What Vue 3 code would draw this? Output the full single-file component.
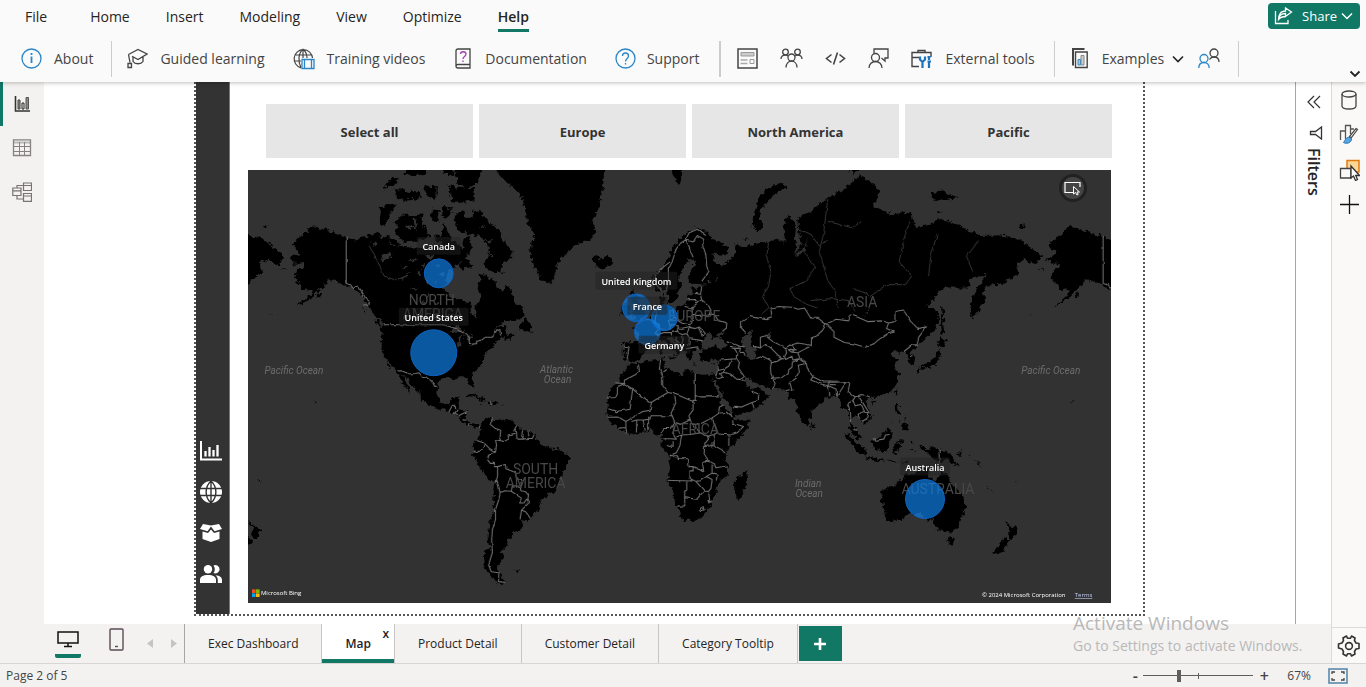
<script setup>
import { ref } from 'vue'

const menus = ['File', 'Home', 'Insert', 'Modeling', 'View', 'Optimize', 'Help']
const activeMenu = ref('Help')
const regions = ['Select all', 'Europe', 'North America', 'Pacific']
const sheets = ['Exec Dashboard', 'Map', 'Product Detail', 'Customer Detail', 'Category Tooltip']
const activeSheet = ref('Map')
const zoom = ref(32)

/* Mercator projection of "lon,lat lon,lat ..." lists */
const PX_PER_DEG = 2.1055
const RADIUS = PX_PER_DEG * 180 / Math.PI
const WORLD = PX_PER_DEG * 360
const project = (pair) => {
  const [lon, lat] = pair.split(',').map(Number)
  const x = 642.2 + lon * PX_PER_DEG
  const y = 443.7 - RADIUS * Math.log(Math.tan(Math.PI / 4 + lat * Math.PI / 360))
  return x.toFixed(1) + ' ' + y.toFixed(1)
}
const line = (s) => 'M' + s.trim().split(/\s+/).map(project).join('L')
const area = (s) => line(s) + 'Z'

const landShapes = [
  // North America
  '-168,65.6 -163,66.6 -162,66.2 -166.8,68.3 -163,69.5 -156.6,71.3 -152,70.8 -145,70 -141,69.6 -137,69 -134,69.5 -129,70 -127,70.4 -124,69.4 -122,69.8 -117,69 -115,68 -110,67.9 -108,67.5 -102,67.8 -98,67.9 -95,68 -96,69.5 -94.5,71.9 -92,70 -91,69 -88,68.5 -86,67.5 -85,69.5 -82,69.5 -81.5,68 -83,66.3 -87,65 -87.5,64.3 -91,63.5 -93.5,61.5 -94.6,59 -92.5,57 -88,56.5 -82.3,55.2 -82.2,53 -79.5,51.3 -79,52.5 -79.5,54.6 -76.6,57 -78.5,59 -77.5,61 -78,62.4 -74,62.3 -70,61 -69.5,59 -66.5,58.8 -64.5,60.3 -62,57.5 -60,55 -57,53.5 -56,52 -60,50.2 -66,50.2 -69,48.7 -71,46.8 -68,48.8 -64.5,49 -65,47.5 -64,46 -61,45.8 -60,46.5 -61.5,45.2 -65.5,43.5 -66,45 -67,44.8 -70,43.6 -70.7,42 -70,41.6 -74,40.6 -74.3,39.4 -75.5,38 -76,37 -76,35.2 -78,33.8 -81,31.8 -81.3,30 -80,27 -80.4,25.2 -81.8,26 -82.8,28 -84,30 -85.5,29.8 -88,30.4 -89.5,29.2 -91,29.3 -94,29.6 -97,28 -97.3,26 -97.8,22.5 -96,19.2 -94.5,18.2 -92,18.6 -90.5,20.8 -87,21.5 -87.5,19 -88.5,16 -86,15.9 -83.2,15 -83.7,11.5 -82,9 -79.5,9.5 -77.3,8.6 -77.5,7.5 -79.8,7.3 -80.5,8.2 -83,8.2 -85.7,10 -87.5,12.8 -91.5,14 -94.5,16.1 -97,15.8 -101,17.4 -105.5,20 -105.5,22.5 -109,25.6 -112.5,29.5 -114.8,31.7 -112.5,27.5 -110,23 -112.2,25.5 -114.5,27.5 -115.8,30 -117.1,32.5 -118.5,34 -120.6,34.6 -122.5,37.5 -124.3,40.4 -124,44 -124.6,48.3 -122.5,48.5 -124,50 -127.5,51.5 -130.3,54.5 -133,57 -137,58.8 -142,60 -146,61 -150,61 -151.5,59.4 -154,58.5 -158,56.5 -162,55.2 -164.5,54.6 -161,56 -157.5,57.7 -157.5,58.8 -162,58.7 -162,60 -165.5,61.2 -164.5,63 -161,64 -161,64.7 -166,64.6',
  // Canadian archipelago
  '-80,73.7 -76,72.8 -72,71.6 -68,70.5 -66,69 -62,67 -62,66 -66,65 -68,63 -65,62.8 -70,62.6 -77,64.3 -74,65.4 -73,68 -78,69.8 -84,70 -89,71 -89.5,73 -85,73.7 -84,72.5 -81,72.5',
  '-117,69.8 -113,68.6 -105,69 -101,69.8 -105,71.5 -105,73 -110,72.8 -114,73 -118,72 -116,71 -118,70.5',
  '-125.5,72 -123,71.2 -119,73.5 -117,74.2 -121,74.5 -125,73.8',
  '-86,66 -84,65.8 -80.5,64 -83,63.8 -87,63.6', '-100,73.8 -97,73.5 -97,71.8 -101,72.5',
  '-95,74 -90.5,73.8 -92,72.8 -95.5,72.2', '-92,76.6 -80,76.2 -80,74.7 -91,74.7', '-118,76.3 -110,75.8 -106,76 -105.5,75 -114,74.8 -117,75.4',
  '-104,76.6 -98,76.5 -98,75 -103,75.5', '-90,79 -76,79 -78,76.8 -84,76.3 -88,76.8', '-96,78.8 -91,79 -89,77.6 -95,77.8', '-110,78.5 -100,78.8 -104,77.8 -114,77.6',
  '-123,76.2 -119,76.5 -116,77.3 -119,77.4', '-98,70 -95.8,69.5 -96,68.7 -99,69', '-78,73.5 -76,73.3 -76,72.9 -79,72.8',
  // Greenland, Iceland, Svalbard
  '-70,79 -69,78 -65,77 -61,76.2 -57.5,75.3 -55,72 -51.5,70 -53.5,67 -51.5,64 -48,61 -43.5,59.9 -42,62 -40,65 -33,68 -25,69 -22,70.5 -24,72 -21,74 -19,76 -18,79 -18,82 -75,82',
  '-24,65.5 -22,66.4 -21,65.5 -16,66.5 -13.7,65 -18.5,63.4 -22.5,63.9 -22,64.8', '13,79 14,78 17,76.6 19,78.3 25,79',
  // Newfoundland, Vancouver, Caribbean, Aleutians
  '-59,47.8 -55.5,51.5 -53,48.5 -53,46.8 -56,47', '-128,50.6 -125,50 -123.5,48.4 -125.5,49', '-133,54 -131.7,53.5 -131.3,52.3',
  '-84.8,22 -81,23.1 -77,21.5 -74.3,20.2 -77.5,19.9 -79,21.5', '-74,19.8 -70,19.7 -68.5,18.5 -71.5,17.8 -74,18.4', '-78.2,18.4 -76.3,18 -77.8,17.8', '-67,18.4 -65.8,18.3 -66.9,18',
  '-154.5,57.8 -152.3,58 -154,56.9', '-168.5,53.2 -166,54 -167.5,53.5', '-172,63.6 -169,63.3 -171,63.3', '-156,20.2 -155,19.6 -156,19.1', '-177,52 -173,52.3 -177,51.8',
  // South America
  '-77.5,8.6 -75.5,10.6 -74.8,11.1 -71.5,12.3 -71.8,10.9 -68,11.3 -66,10.5 -62,10.7 -60,8.5 -57,6 -52,4.8 -50,1 -48,-1 -44,-2.5 -40,-2.8 -37,-4.8 -35,-6 -35,-9 -38,-13 -39,-17 -41,-22 -45,-23.5 -48.5,-26 -48.8,-28.5 -52,-32.5 -54.5,-34.8 -58,-34.2 -57,-36.5 -58,-38.3 -62,-39 -62.3,-40.8 -65,-41 -63.7,-42.5 -65.3,-44.5 -67.5,-46 -65.8,-47.5 -69,-50.5 -68.4,-52.3 -65.2,-54.7 -68,-55.5 -72,-53.5 -75,-51 -75.5,-47 -73,-44 -73.8,-41 -73.3,-37 -71.5,-32 -70.3,-24 -70.4,-18.3 -76,-14 -79,-8 -81.2,-5.5 -80,-3 -81,-1.5 -80,0.7 -78.5,2 -77.3,4 -77.7,7.2',
  '-61,-51.6 -58,-51.5 -60,-52.2',
  // Africa and Madagascar
  '-6,35.8 -2,35.1 3,36.8 10,37.3 11,35 10.2,34 15,32.3 19,30.3 20,32.8 25,31.6 29,31 32.3,31.3 32.6,29.9 34,26.5 35.8,24 37.2,21 37.3,18.8 39.5,15.5 43,12.5 43.2,11.5 46,10.7 51.2,11.9 50.8,9.5 47.8,4.3 43,-0.5 40,-3.5 39,-7 40.6,-11 40.6,-15 36,-18.8 35,-21 35.4,-24 32.8,-26 32,-29 28,-33 25.7,-34 20,-34.8 18.4,-34.2 18.2,-32 15.3,-27 14.5,-22.5 11.8,-17.5 13.7,-12 12.3,-6 9,-1 9.5,4 6,4.3 3.5,6.4 -2,4.8 -7.5,4.4 -13,8.5 -16.8,12.5 -17.4,14.7 -16.3,19 -17,21.3 -14.5,26 -11,28.6 -9.8,30.5 -8.5,33.3',
  '49.3,-12 50.5,-15.5 47.2,-25 45,-25.5 43.5,-22 44.5,-16.5 47.5,-15',
  // Eurasia
  '-9.3,43 -1.8,43.4 -1.2,46 -4.7,48.4 -1.5,48.7 -1.5,49.7 1.5,50.2 4,51.7 7,53.5 8.5,54 8.2,57 10.5,57.7 10.3,56 10,54.5 12.5,54.3 14.2,53.9 18.5,54.7 21,55.2 21.5,57.5 24,57.2 23.5,59 28,59.6 30,60 25,60.2 22.5,60.2 21.3,61.5 25.3,65 22,65.8 17.5,62 17.5,60.6 18.8,60 16.5,57 14.3,55.5 12.8,55.6 11.2,59 8,58 5.3,59 5,61.8 10,64 14,67.5 19,69.8 25.5,71.1 31,70.3 33,69.4 41,67.5 40,66.3 33,66.6 35,64.3 38,64 40.5,65 44,66.2 44,68.3 47,67.8 54,68.4 60,68.8 65,69.2 68,68.5 67,71 69,73 73,71.5 72.5,69 73.5,68 72,66.5 74,67 75,68.5 74,72.5 80,73.5 87,75 95,76.1 104,77.7 113,76 110,74 113,73.6 119,73 127,73.3 130,71 137,71.5 140,72.5 150,71.5 160,69.7 170,69.8 177,69.5 180,69 190,66 187,64.4 182,65.5 177.5,64.7 179.5,62.5 170,60 163.5,59.8 162,57.8 163,56 160,53.3 156.7,51 155.6,55 158,58 164,62.5 160,61.7 156,61.5 155,59.3 143,59.3 135.5,54.7 141,53 140.5,50 138,46.5 132,43.2 129.7,41.5 127.5,39.5 129.4,37 129,35.3 126.5,34.5 126.5,37.5 124.5,40 121.5,39 121,41 118,39 120,37.3 122.5,37 119.5,35 122,31.5 121.5,28.5 118.5,24.5 114,22.3 110,20.5 108,21.6 105.8,19 109,13 109,11.5 105,8.6 105,10.3 101,13.3 99.8,12 99.3,9.3 103.3,4 104,1.3 101,3 98.5,8 98.5,12 97.5,16.5 94.3,16 94.3,18.5 91.8,22.5 88,21.7 86.5,20 82,16.5 80.2,15 80,12 78,8.3 76.3,10 74,15 72.8,19.5 72.5,21 70,21 69,22.3 70,23 67,24.8 61.6,25.1 57,26.7 54,26.6 50.5,30 48.5,30.2 48.2,29 50.2,26.5 51.2,25.5 51.5,24.3 56.2,26 57,24 59.8,22.4 57.5,18.8 52,15.6 45,12.8 43.3,12.8 42.5,16.5 39,21 35,28 34.9,29.5 34.3,27.8 32.6,29.9 32.3,31.3 34.5,31.6 36,35 36,36.8 31,36.6 27.5,37 26.5,39.5 30,41 35,42 38,41 41.5,41.6 37,45 39,47 35,46.3 36.5,45.2 33.5,44.5 32.8,46 30.5,46 28,43.5 28,41.5 29,41 26,40.8 23.5,40.2 24,38 22.8,36.5 21,38.5 19.4,41.5 14,45 12.4,45.3 12.5,44 15,42 18.4,40.2 16.8,39 15.7,38 15.7,40 12.3,41.8 10,44 7,43.5 4,43.5 3.2,42 0,39.5 -0.5,37.8 -2,36.7 -5.6,36 -6.5,37 -9,37 -9.5,38.7',
  // European islands
  '-5.5,50 1.2,51.2 1.5,52.8 0,53.5 -2,55.8 -2,57.6 -5,58.6 -6,56.5 -3,54.5 -4.5,53 -5,51.7 -3,51.5', '-10,52 -6.5,52.2 -6,54.5 -8,55.3 -10,54', '12.5,38 15.5,38.2 15,36.7', '8.3,40.8 9.7,41 9.5,39.2 8.5,39', '8.7,42.6 9.5,42.8 9.2,41.5', '23.5,35.5 26.3,35.2 24,34.9', '32.5,35 34.5,35.6 33.5,34.7', '11,55.8 12.5,56 12,54.8',
  // Arctic Russia
  '51.5,71.5 55,70.7 57.5,70.7 55.5,72.5 57,74 62,75.5 68.5,76.4 67,77 60,76.4 55,75 53.5,73.5', '95,79 100,79 105,78.5 101,77.9 98,78.1', '137,75.8 142,76 150,75.2 145,74.9 139,74.8', '140,73.6 143.5,73.4 141,73.2', '179,71.3 182,71.4 181,70.9', '48,69.3 50,69.2 49,68.8',
  // East Asia
  '142,54.2 143.3,53 143.5,50 143,49 143.5,46.8 142,46 142,50', '140,41.6 141.8,45.4 145.3,43.4 143,42.1', '141,41.3 142,39.5 140.8,36 138.5,34.8 136,33.6 133,34.5 131,34.2 136,35.8 139,38', '130,33.5 132,33.5 131,31.2', '132.5,34 134.5,34.2 133,32.9', '120,23 121.5,25.2 121,22.2', '108.7,19.3 110.8,20 109.5,18.3',
  '120.5,18.4 122.2,18.4 121.5,15.5 124,13 121,13.8 120,16', '122,11.5 123,10 122,10', '124.5,12.3 125.5,11.5 125,10.3', '122,7.5 125.5,9.6 126.3,7.5 125,6', '117.3,8.3 119.4,11 118,9',
  '80,9.7 81.8,7.5 80.8,6 79.8,7',
  // Indonesia and New Guinea
  '95.3,5.6 98,4.2 103.5,-1 106,-3.2 105.7,-5.8 102,-4 98.5,0.8', '105.2,-6.7 108.5,-6.6 114.4,-7.7 114.4,-8.6 108,-7.8', '109,1.5 113,3.2 116.8,7 119,5 117.5,1 116,-3.8 112,-3.4 110,-1.5', '119.8,-0.5 120.5,1.2 125,1.6 123,0.4 120.5,0.4 123.3,-0.9 121.5,-1.8 122.8,-4.6 121,-3 120.4,-5.5 119.4,-5.4 118.9,-2.8', '115,-8.3 119,-8.4 122.8,-8.4 119,-8.9', '124,-9.3 127,-8.4 124,-10.2', '127.5,1.8 128.7,1 128,-0.8', '127,-3.2 130.5,-3.2 129,-3.6',
  '131,-0.8 134,-0.8 135,-3.3 138,-1.7 144.5,-3.9 147.8,-6 147.5,-7.8 150.8,-10.4 148,-10 144,-7.7 142.5,-9.2 138,-8.2 138,-5.5 133,-4 132.5,-2.8', '148.5,-5.6 152,-4.2 151,-5.9', '150.8,-2.6 153,-4.4 151,-3.2', '155,-5.5 156,-6.7 155.3,-6.4', '157,-7.5 161.5,-10 160,-9.8', '164,-20.1 167,-22.2 165,-21.4', '177.3,-17.5 178.6,-18 177.5,-18.2',
  // Australia, Tasmania, New Zealand
  '113.5,-22 114.2,-22 117,-20.7 121,-19.5 122.2,-17.3 125.5,-14.3 128,-15 129.8,-14.9 130.8,-12.4 132.5,-11.3 136.8,-12.2 135.6,-15 139.5,-17.5 141,-16.5 141.6,-13 142.5,-10.8 143.6,-14.2 145.4,-15 146.3,-18.9 149,-20.4 153,-25 153.5,-28.5 152.5,-32.3 150,-37.3 146.4,-39 143.5,-38.8 140.5,-38 138.2,-35.6 137.5,-33.5 135.8,-34.8 134,-32.7 131,-31.5 126,-32.3 123.5,-34 118,-35 115.2,-34.3 115.7,-31.8 113.7,-26.5', '144.7,-40.8 148.3,-40.9 147.5,-43.3 146,-43.4',
  '172.7,-34.5 175.5,-36.5 178.3,-37.8 176.8,-39.8 175.2,-41.5 173.8,-39.3 174.8,-38', '172.8,-40.6 174.3,-41.8 172.7,-43.8 170.7,-45.9 168.4,-46.6 166.5,-46 170.5,-43'
]

const waterShapes = [
  // Great Lakes
  '-92,46.7 -88,48.8 -84.7,46.7 -88,46.8', '-87.8,42 -87.5,45 -85,46 -86.3,43.5 -86.8,41.8', '-84,46 -80.5,45.5 -82,43.2 -83.5,44', '-83,41.6 -79,42.8 -81,42.6', '-79.7,43.3 -76.5,44 -78,43.4',
  // Northern lakes
  '-99,50.5 -97,53.6 -97,51', '-117,61 -112,62.5 -110,62.7 -114,61.2', '-125,66 -120,66.8 -119,66 -123,65.2', '-111,59.2 -106,59.5 -109,58.9', '-103,57 -101.5,58 -102,56.6', '-100,64.5 -95,64.2 -98,63.9', '-103,66 -99,66.5 -101,65.5', '-108,62.8 -104,63.2 -106,62.4', '-100,60.5 -98,61 -98.5,60', '-112,65.3 -107,65.6 -110,64.8', '-74,66.9 -71,66.4 -72,66',
  '-104,60.6 -102,61.2 -102,60.2', '-97,62.5 -94,63 -95,62', '-115,64 -111,64.3 -113,63.5', '-106,64.4 -103,64.8 -104,64', '-99,55 -97,56 -97.5,54.6', '-105,55.2 -103.5,56 -104,54.8', '-92,52 -90,52.6 -91,51.5', '-121,69 -118,68 -120,68', '-129,68.5 -126,68.8 -127,68',
  '-75,69 -71,69.2 -73,68.6', '-78,71.6 -73,70.5 -76,71', '-113,71.4 -107,71.2 -111,70.8', '-109,72.4 -107,71.8 -108,70.3',
  '30,61 32,61.5 32.5,60.2 31,60', '34.5,62 36,61.3 35.3,61',
  // Caspian, Aral and smaller seas
  '47,44.5 51,47 53,46.5 51,44.5 52.5,42 54,41 54,37 50,37.4 49,40.5', '58.5,46 61,46.5 60,44.5',
  '104,51.5 107,52.5 109.8,55.6 108,54 105.5,51.8', '32,0.2 34,0.2 33.5,-2.5 32,-2.4',
  '72.5,66.4 77,67.6 78.5,69.5 77.5,67.3 73,65.8'
]

const borderLines = [
  '-141,69.6 -141,60.3 -139,60 -137.5,59 -135.5,59.7 -133.5,58.3 -131.8,56.6 -130,55.8 -130.3,54.9 -133,54.8',
  '-123,49 -95,49 -89.5,48 -84.5,46.5 -82.5,45.3 -82.5,42.5 -79,42.8 -79,43.5 -76.5,44 -74.8,45 -71.5,45 -70.3,46 -69.5,47.4 -68,47.3 -67.5,45.5',
  '-117,32.5 -114.7,32.6 -111,31.3 -108,31.5 -106.5,31.8 -104,29.5 -102.5,29.7 -100.5,28.5 -99,26.4 -97.2,25.9',
  '-92.2,14.6 -91.5,16 -90.5,17.8 -89.1,17.8 -89,16', '-90,13.9 -89.3,14.4 -88.2,15.7', '-89.3,14.4 -87.8,13.3', '-87.5,13 -86,13.8 -83.2,15', '-85.7,11.1 -83.7,10.9', '-83,8.3 -82.6,9.6', '-77.4,8.6 -77.8,7.2', '-71.8,19.8 -71.8,18',
  '-71.5,12 -72.5,9 -70,7 -67.5,6.2 -67.8,3 -67,1.2 -66,0.8 -63.5,2.2 -64,4 -61,4.6 -60,5.2 -61.3,6 -60,8.4',
  '-67,1.2 -70,1.7 -69.5,-1 -70,-4.2 -73,-2.3 -75.3,0 -78.8,1.4', '-75.3,0 -76,-2.5 -78.5,-4.5 -80.3,-3.8',
  '-70,-4.2 -73,-5 -74,-7.5 -72.5,-9.5 -70.5,-9.5 -70.5,-11 -69,-11 -69,-15 -69.5,-17.5 -70.4,-18.3',
  '-69,-11 -65.3,-10 -65,-12 -60.5,-13.8 -60,-16.2 -58,-17.5 -57.7,-19.5 -58.2,-20 -62,-19.8 -62.5,-22.2 -66,-22 -67.8,-22.8 -68.5,-20 -69.5,-17.5',
  '-67.8,-22.8 -68.5,-26 -70,-30 -70,-34 -71.5,-38 -71.8,-42 -71.5,-46 -73.3,-50 -72,-52 -68.4,-52.3 -68.6,-54.8 -65.5,-55',
  '-62.5,-22.2 -57.7,-25.2 -58.5,-27.3 -56,-27.3 -54.6,-25.5 -54.3,-24 -55.8,-22.3 -58,-22 -58.2,-20', '-54.6,-25.5 -53.8,-27 -57.6,-30.2 -58.3,-34', '-57.6,-30.2 -55.5,-31 -53.4,-33.7',
  '-60,5.2 -59.8,2 -57,2 -54.5,2.3 -52.5,2.3 -51.6,4.2', '-57.2,6 -57.5,3.5 -56.5,2', '-54,5.8 -54.5,2.3',
  // Europe
  '-8.8,41.9 -6.5,41.7 -7,39 -7.4,37.2', '-1.8,43.4 3.2,42.4', '2.5,51 6,49.5 8,49 7.6,47.6 6,46.3 7,45.8 7.5,43.8', '7,53.3 6,51 6,49.5', '7.6,47.6 13,47.6 13,48.8 12.2,50.3 15,51 14.2,53.9', '7,45.9 10,46.5 13.7,46.5 13.7,45.6', '13,48.8 17,48.7 16.5,47 13.7,46.5', '15,51 18.8,49.5 22.5,49 24,50.7 23.6,52.5 23.5,54 20,54.4', '17,48 18.8,47.9 22.5,48.5 21,46.2 18.8,45.9 16.5,46.5', '19,45.9 19.2,44 18.5,42.5', '16,45 15.8,44 17.5,43', '21,46.2 22.5,44.5 27,44 28.5,43.8', '22.5,44.5 22.5,42.5 21,42.2 19.5,42', '20.5,41 23,41.3 26.3,41.7 26.2,40.8', '22.5,48.2 25,47.8 27,48.3 29.8,46.3 28.2,45.3', '26.5,48.2 28,46 28.2,45.3',
  '21,56.2 25,56.3 26.6,55.7 23.5,54', '24.3,57.9 27.5,57.6 28,59.5', '26.6,55.7 28,56.2 27.5,57.6', '28,56.2 31,55 32.5,53.3 31.5,52 24,51.8', '31.5,52.1 34,52.2 36,50.3 40,49.6 39.8,47.9 38,47', '11.3,59 12.3,61 12.2,63.5 14,65 16,67.5 18,68.5 20.5,69.1 24,65.9', '20.5,69.1 24,68.7 26,69.8 29,69.2 28.5,68.2 30,66.5 30.5,64 31.5,63 28,60.7', '13,65 10,64 6,62 6.5,60 9,58.6', '20.5,69.1 22,70.2 26,70.8 30,69.8',
  // Middle East
  '41.5,41.5 43.5,41.1 44.8,39.7 44.5,37.2 42.3,37.2 36.5,36.7', '40,43.4 44,42.6 46.5,41.8 48.5,41.8', '43.5,41.1 46.5,41.2 46,39.5 48,39.7 48.8,38.4', '44.5,37.2 46,35.5 45.5,33.8 47.8,31 48.4,30', '42.3,37.2 41,34.5 38.8,33.3 36,32.7 35.8,34.5', '38.8,33.3 39,32 37,31.5 38,30 36,29.3 35,29.4', '39,32 42,31.2 44.7,29.2 46.6,29.1 48.4,28.6', '36,32.7 35.5,31 34.9,29.5', '46.6,29.1 48,30', '43,16.5 44,17.4 47,17 52,19 55,20 55.2,22.8 51.8,24', '52,19 53,16.6',
  // Central and South Asia
  '54,37.4 57,38.2 61,36.6 61.2,35.6 60.8,34 61,31.5 63,27.2 61.6,25.2', '61.2,35.6 64.5,36.5 66.5,37.4 68,37 71,38.2 71.5,36.8 74.8,37.3 71.2,36 71,34 69.5,33 69.2,31.8 66.3,29.9 61,29.5', '74.8,37.3 77.8,35.5 79,32.5 81,30.2 86,28 88.8,28 92,27.9 97,28.2 98.5,27.5', '77.8,35.5 74,34.8 74.5,32 73,29.5 70,27.8 71,24.5 68.2,23.7', '81,30.2 80,28.8 84,27.4 88,26.4 88.8,28', '88.2,26.4 88.8,24.2 89,21.8', '88.2,26.4 92,25 92.3,22', '89,26.9 92,26.8', '97,28.2 94,24 92.3,21.5', '98.5,27.5 97.7,24 101,21.5 100,20 97.5,18.5 98.8,15 99,12 98.8,10', '101,21.5 104,22.6 106.8,22 108,21.6', '100,20 101,17.6 104,18.2 105.5,15 103,14.3 102.5,13.4 103,11.8', '102,22.4 104,20 106,17 107.6,14.5 107,12 104.5,10.5', '105.5,14.5 107.5,14.5', '100.2,6.5 102,6.2', '109.7,2 111,1 114.5,1.5 115.5,4 117.5,4.2', '141,-2.7 141,-9.1', '124.3,40 127,41.6 129,42.4 130.6,42.4', '126.7,38 128.3,38.5',
  // Kazakhstan, Mongolia, China
  '49,46.5 47,48 47,50 51,51.5 55,51 59,50.6 61.5,51.2 61,54 65,54.4 71,54.2 74,53.6 77,54 80,51 83.5,51 87.3,49.2 92,50.7 98,50.2 99,52 102,51.4 107,50 114,50.2 117,49.6 120,50 120,53 124,53.4 127.5,50 131,47.8 135,48.4 131.3,45 130.6,42.4',
  '87.3,49.2 91,46.8 91,45 96,43.2 101,42.6 105,41.7 110,42.7 112,44 116,46 119.8,46.7 116,47.8 117,49.6', '87.3,49.2 85.5,47.2 82.5,45.3 80.3,44.8 80.2,42 76,40.4 73.8,39.5 74.8,37.3', '80.2,42.2 74,43 71,42.4 68,41 66,42 62,43.5 58.5,45.5 56,45 56,41.3 52.5,41.8', '56,41.3 58.5,42.5 61,41.3 64,38.9 66.5,37.4', '71,42.4 73,40.5 70.5,40.8 69.3,40.6 71,39.7 73.8,39.5', '68,41 68.5,39.5 67.5,38 68,37', '70.5,40.8 72,40.2 71,39.7',
  // Africa
  '-2,35.1 -1.5,32.3 -3.5,31 -8.7,28.7 -8.7,27.3 -13,27.7', '-8.7,27.3 -4.8,25 3,19.2 4.2,19.2 12,23.5 15,23 24,19.5 24,20 25,20', '-8.7,27.3 -12,26 -12,23.4 -13,21.3 -17,21', '-4.8,25 -6,16 -11.5,15.2 -12,14.8 -16.3,16.2', '8.5,37 8,33.5 9.5,30.3 9.5,26.5 12,23.5', '9.5,31.8 11.5,33.1', '25,31.6 25,22 36.5,22', '25,22 25,20 24,20', '4.2,19.2 3.5,15.5 0,15 -5,12 -8,10.3 -11.5,12.4 -16.7,12.3', '15,23 15.8,19 13.5,14 14,13 4,13 3.5,11.5 1,11.1 -2.8,11 -5.3,10.3', '-8,10.3 -8,7.5 -11.3,7.2', '-8,7.5 -7.5,4.4', '-2.8,11 -3,5.1', '0.2,11 1.2,6.1', '2.8,12 2.8,6.4', '14,13 15.3,10 13,7 10,7 8.7,4.8', '15.3,10 18,9 22.5,11 24,8.7 27.4,5 30.8,3.5', '24,19.5 24,15.7 22,13 22.5,11', '15.3,10 14.5,5 16,2 13,2.2 9.8,2.2', '16,3 18.6,4 22.5,4.2 27.4,5', '24,8.7 28,9.5 33,12 34,9.5 35.5,5 34,4.2 30.8,3.5', '33,12 36,14 36.5,17 38.5,18', '36.5,14.3 40,14.5 42.4,12.5', '42.8,11 43,9.5 48,8 45,5 42,4 36,4.4', '41,4 41,-1.7', '34,4.2 34,0.5 34,-1 37.5,-3 39.2,-4.7', '30.8,3.5 31.3,2 29.7,0 29.5,-1.5 34,-1', '29.5,-1.5 29.2,-4.5 31,-8.5 34,-9.5 34.8,-11.5 40.5,-10.6', '11.5,-1 14.5,-2 14.5,1', '18.6,4 17.7,-1 16,-4.5 12.3,-6', '12.3,-5.9 16.5,-5.9 17,-7.2 21.8,-7.3 22,-11 24,-11 24,-13 22,-13 22,-16.2 23.5,-17.6 14,-17.4 11.8,-17.3', '24,-11 26,-12 29,-13.3 28.5,-9.2 30.8,-8.5', '22,-16.2 25.3,-17.8 27.5,-17.5 30.3,-15.6 33,-14 33,-10', '33,-14 35.5,-14.5 35,-17', '30.3,-15.6 33,-17 32.5,-21 31.3,-22.3 29.3,-22.1 25.3,-17.8', '21,-18 21,-22 20,-22 20,-28.5 16.5,-28.6', '20,-25 22.7,-25.3 25.6,-25.7 29.3,-22.1', '31.3,-22.3 32,-26.8 32.8,-26.8', '27,-29.8 28.8,-28.8 29.2,-30 27.7,-30.5 27,-29.8', '31,-26 32,-26.5 31.5,-27.3 31,-26'
]

const riverLines = [
  '60,69 59,66 61,63 60,60 57,57 60,54 56,52', '77,67 82,64 78,61 70,59 72,57 78,55 83,54', '88,75 86,70 84,67 88,61 92,58 93,54', '127,72 124,69 122,65 128,62 125,60 116,60 108,57', '140,70 137,66 136,62', '160,69 154,66 157,63', '80,56 90,56.5 98,56 101,53', '88,72 100,71 104,72', '-130,68 -126,65 -123,62 -117,61', '73,71 80,70 84,68 88,69', '100,59 106,58 110,56'
]

const land = landShapes.map(area).join('')
const water = waterShapes.map(area).join('')
const borders = borderLines.map(line).join('')
const rivers = riverLines.map(line).join('')

const bubbles = [
  { name: 'Canada', x: 438, y: 273.5, r: 14.5, ly: 250, w: 44 },
  { name: 'United States', x: 433, y: 353, r: 23, ly: 321, w: 70 },
  { name: 'United Kingdom', x: 636, y: 308, r: 14, ly: 285, w: 82 },
  { name: 'France', x: 647, y: 332, r: 13, ly: 310, w: 40 },
  { name: 'Germany', x: 664, y: 318, r: 13, ly: 349, w: 52 },
  { name: 'Australia', x: 925, y: 499.5, r: 19.5, ly: 471, w: 50 }
]
const continents = [
  { t: 'NORTH', x: 431, y: 305 }, { t: 'AMERICA', x: 432, y: 319 },
  { t: 'SOUTH', x: 535, y: 474 }, { t: 'AMERICA', x: 535, y: 488 },
  { t: 'EUROPE', x: 694, y: 321 }, { t: 'ASIA', x: 862, y: 307 },
  { t: 'AFRICA', x: 695, y: 434 }, { t: 'AUSTRALIA', x: 938, y: 494 }
]
const oceans = [
  { t: 'Pacific Ocean', x: 293, y: 374 }, { t: 'Pacific Ocean', x: 1051, y: 374 },
  { t: 'Atlantic', x: 556, y: 373 }, { t: 'Ocean', x: 557, y: 383 },
  { t: 'Indian', x: 808, y: 487 }, { t: 'Ocean', x: 809, y: 497 }
]
</script>

<template>
  <div class="app">
    <header class="top">
      <div class="menu-row">
        <nav class="menus" aria-label="Ribbon tabs">
          <button v-for="m in menus" :key="m" :class="['menu', { active: m === activeMenu }]" @click="activeMenu = m">{{ m }}</button>
        </nav>
        <button class="share">
          <svg width="20" height="18" viewBox="0 0 20 18" fill="none" stroke="#fff" stroke-width="1.3"><path d="M1.5 4v12.5H14V13M4.5 12.5C5 8 7.5 6.500 11.500 6.500V9.500L17.500 5L11.500 1V4C6.500 4 4.500 8 4.500 12.500C6.500 10 8.500 9.500 11.500 9.500" /></svg>
          <span>Share</span>
          <svg class="share-chev" width="12" height="8" viewBox="0 0 12 8" fill="none" stroke="#fff" stroke-width="1.4"><path d="M1 1.500L6 6.500L11 1.500" /></svg>
        </button>
      </div>
      <div class="ribbon">
        <button class="tool about">
          <svg width="21" height="21" viewBox="0 0 21 21" fill="none" stroke="#2a86c8" stroke-width="1.3"><circle cx="10.500" cy="10.500" r="9.500" /><path d="M10.500 8.500V15M10.500 5V7" stroke-width="1.800" /></svg>
          <span>About</span>
        </button>
        <i class="sep"></i>
        <button class="tool guided">
          <svg width="21" height="21" viewBox="0 0 21 21" fill="none" stroke="#444" stroke-width="1.300"><path d="M1.500 6.500L11 1.500L20 6L11 11.500L5 8.200M6 9V13.500C8 16.500 14 16.500 16 13.500V9M1.500 6.500L3 14.500M1 15.500H4.500V19.500H1Z" /></svg>
          <span>Guided learning</span>
        </button>
        <button class="tool training">
          <svg width="22" height="22" viewBox="0 0 22 22" fill="none" stroke="#444" stroke-width="1.200"><path d="M8 19.800A9.200 9.200 0 1 1 19.500 10M1.500 7H18.500M1.500 13H8M8 19.500C5 14 5 5 10 1.200C13.500 4 14 7 14 10M10 1.200V10" /><path d="M9 11.500H21V20.500H9ZM11.500 11.500V20.500M18.500 11.500V20.500" stroke="#2a86c8" stroke-width="1.300" /></svg>
          <span>Training videos</span>
        </button>
        <button class="tool docs">
          <svg width="16" height="21" viewBox="0 0 16 21" fill="none" stroke="#444" stroke-width="1.300"><path d="M15 16.500V1H3C1.800 1 1 1.800 1 3V18C1 19.200 1.800 20 3 20H15V16.500H3C1.800 16.500 1 17 1 18" /><path d="M5.500 6C5.500 3 11 3 11 6C11 8.500 8 8.500 8 11M8 12.500V14" stroke="#a63db8" /></svg>
          <span>Documentation</span>
        </button>
        <button class="tool support">
          <svg width="21" height="21" viewBox="0 0 21 21" fill="none" stroke="#2a86c8" stroke-width="1.300"><circle cx="10.500" cy="10.500" r="9.500" /><path d="M7.500 8C7.500 4 13.500 4 13.500 8C13.500 10.500 10.500 10.500 10.500 13.500M10.500 15V16.500" /></svg>
          <span>Support</span>
        </button>
        <i class="sep wide"></i>
        <button class="tool" aria-label="Power BI blog">
          <svg width="21" height="21" viewBox="0 0 21 21" fill="none"><path d="M1 1H20V20H1Z" stroke="#444" stroke-width="1.500" /><path d="M4 4.500H17V8H4Z" fill="#ccc" stroke="#999" /><path d="M3.500 12H10.500M3.500 15.500H10.500" stroke="#aaa" stroke-width="1.500" /><path d="M13 11.500H17V15.500H13Z" stroke="#999" /></svg>
        </button>
        <button class="tool" aria-label="Community">
          <svg width="23" height="21" viewBox="0 0 23 21" fill="none" stroke="#444" stroke-width="1.300"><circle cx="5.500" cy="4" r="2.800" /><circle cx="17.500" cy="4" r="2.800" /><circle cx="11.500" cy="9.500" r="3.500" /><path d="M1 11C1 8.500 3 7 5.500 7L8 8M22 11C22 8.500 20 7 17.500 7L15 8M6 19.500C6 15.500 8.500 13.200 11.500 13.200S17 15.500 17 19.500" /></svg>
        </button>
        <button class="tool" aria-label="Power BI for developers">
          <svg width="21" height="21" viewBox="0 0 21 21" fill="none" stroke="#444" stroke-width="1.600"><path d="M6.500 6.500L1.500 10.500L6.500 14.500M14.500 6.500L19.500 10.500L14.500 14.500M12.500 4.500L8.500 16.500" /></svg>
        </button>
        <button class="tool" aria-label="Submit an idea">
          <svg width="21" height="21" viewBox="0 0 21 21" fill="none" stroke="#444" stroke-width="1.300"><path d="M6 5V1H20V10H17V13L13.500 10" /><circle cx="7.500" cy="9.500" r="4" /><path d="M1 20C1 16 4 13.500 7.500 13.500S14 16 14 20" /></svg>
        </button>
        <button class="tool external">
          <svg width="22" height="21" viewBox="0 0 22 21" fill="none"><path d="M8 18.500H1V4.500H20V9M1 9.500H8M7 4.500V2.500H14V4.500" stroke="#444" stroke-width="1.400" /><path d="M11.500 20V14.500M9 8.500V11.500L11.500 14L14 11.500V8.500M18 8V12M18 14V20M16.500 9H19.500M16.500 13.500H20" stroke="#1f75bd" stroke-width="2.200" /></svg>
          <span>External tools</span>
        </button>
        <i class="sep"></i>
        <button class="tool examples">
          <svg width="16" height="21" viewBox="0 0 16 21" fill="none"><path d="M12.500 1H1V17.500" stroke="#444" stroke-width="2" /><path d="M3.500 4H15.200V19.500H3.500Z" stroke="#444" stroke-width="1.400" /><path d="M6 11.500H8.500V17H6Z" stroke="#2a86c8" fill="#9ccbea" /><path d="M9 7.500H12V17H9Z" stroke="#888" fill="#ccc" /></svg>
          <span>Examples</span>
          <svg class="chev" width="12" height="8" viewBox="0 0 12 8" fill="none" stroke="#222" stroke-width="1.600"><path d="M1 1.500L6 6.500L11 1.500" /></svg>
        </button>
        <button class="tool consult" aria-label="Consulting services">
          <svg width="22" height="21" viewBox="0 0 22 21" fill="none" stroke-width="1.300"><g stroke="#444"><circle cx="16" cy="5" r="4" /><path d="M11.500 11.500C12.500 9.800 14 9 16 9C19 9 21 11 21 14" /></g><g stroke="#2a86c8"><circle cx="6" cy="10.500" r="4" /><path d="M.8 20C.8 16.500 3 14.500 6 14.500S11.200 16.500 11.200 20" /></g></svg>
        </button>
        <i class="sep"></i>
        <button class="collapse" aria-label="Collapse ribbon">
          <svg width="12" height="8" viewBox="0 0 12 8" fill="none" stroke="#222" stroke-width="1.800"><path d="M1.500 1.500L6 6L10.500 1.500" /></svg>
        </button>
      </div>
    </header>

    <div class="middle">
      <div class="workspace">
        <div class="work-row">
          <nav class="views" aria-label="Views">
            <button class="view on" aria-label="Report view">
              <svg width="18" height="18" viewBox="0 0 18 18" fill="none"><path d="M2.500 1V16H17" stroke="#333" stroke-width="1.600" /><path d="M5 5H7V14H5Z" stroke="#444" fill="#888" /><path d="M9 8H11V14H9Z" stroke="#222" /><path d="M13 2.500H15.500V14H13Z" stroke="#555" fill="#888" /></svg>
            </button>
            <button class="view" aria-label="Table view">
              <svg width="20" height="18" viewBox="0 0 20 18" fill="none" stroke="#85827f"><path d="M1.500 .8H18.500V16.500H1.500Z" stroke-width="1.300" /><path d="M1 3.500H19" stroke-width="2" opacity=".5" /><path d="M1.500 7.500H18.500M1.500 12.500H18.500M7.500 3V17M12.500 3V17" /></svg>
            </button>
            <button class="view" aria-label="Model view">
              <svg width="20" height="20" viewBox="0 0 20 20" fill="none" stroke="#777472" stroke-width="1.200"><path d="M.8 6H9V13.500H.8ZM.8 8.800H9M11.500 1H19.500V8.500H11.500ZM11.500 3.500H19.500M11.500 11.500H19.500V19.300H11.500ZM11.500 14H19.500M5 6V3.500H11.500M5 13.500V17H11.500" /></svg>
            </button>
          </nav>

          <main class="canvas">
            <div class="page">
              <nav class="page-nav" aria-label="Report pages">
                <a href="#exec" aria-label="Executive dashboard"><svg width="22" height="20" viewBox="0 0 22 20" fill="none" stroke="#fff"><path d="M1 0V18.500H22" stroke-width="2" /><path d="M5.500 10V15.500M9.500 6V15.500M13.500 9V15.500M17.500 4V15.500" stroke-width="2.300" /></svg></a>
                <a href="#map" aria-label="Map"><svg width="22" height="22" viewBox="0 0 22 22"><circle cx="11" cy="11" r="11" fill="#fff" /><path d="M0 7.500H22M0 14.500H22M11 0V22M11 0C4.500 6 4.500 16 11 22C17.500 16 17.500 6 11 0" fill="none" stroke="#333" stroke-width="1.400" /></svg></a>
                <a href="#product" aria-label="Products"><svg width="22" height="18" viewBox="0 0 22 18" fill="#fff"><path d="M3 0L11 1.500L19 0L22 5L14.500 7.300L11 2.500L7.500 7.300L0 5ZM2.500 7.500L8 9L11 5.500L14 9L19.500 7.500V15L11 18L2.500 15Z" /></svg></a>
                <a href="#customer" aria-label="Customers"><svg width="22" height="18" viewBox="0 0 22 18" fill="#fff"><circle cx="8" cy="4.200" r="4.200" /><path d="M0 18V15C0 11.500 3 10 8 10S16 11.500 16 15V18ZM13.500 .5A4.200 4.200 0 1 1 13.500 8A6.500 6.500 0 0 0 13.500 .5M17.800 18V15C17.800 13 17 11.500 15.500 10.200C19.500 10.500 22 12 22 15V18Z" /></svg></a>
              </nav>
              <div class="page-body">
                <div class="slicer">
                  <button v-for="r in regions" :key="r">{{ r }}</button>
                </div>
                <div class="map">
                  <svg class="map-svg" viewBox="247 170 864 434" role="img" aria-label="Sales by country">
                    <defs>
                      <filter id="coast" x="0" y="0" width="100%" height="100%">
                        <feTurbulence type="fractalNoise" baseFrequency=".22" numOctaves="3" seed="4" />
                        <feDisplacementMap in="SourceGraphic" scale="7" xChannelSelector="R" yChannelSelector="G" />
                      </filter>
                      <filter id="edge" x="0" y="0" width="100%" height="100%">
                        <feTurbulence type="fractalNoise" baseFrequency=".14" numOctaves="2" seed="9" />
                        <feDisplacementMap in="SourceGraphic" scale="3" xChannelSelector="R" yChannelSelector="G" />
                      </filter>
                      <g id="world">
                        <path :d="land" fill="#000" />
                        <path :d="water" fill="#323232" />
                      </g>
                      <g id="lines" fill="none" stroke-linejoin="round">
                        <path :d="borders" stroke="#707070" stroke-width="1.100" />
                        <path :d="rivers" stroke="#363636" stroke-width="1" />
                      </g>
                    </defs>
                    <rect x="247" y="170" width="864" height="434" fill="#323232" />
                    <g filter="url(#coast)">
                      <rect x="240" y="160" width="880" height="450" fill="#323232" />
                      <use href="#world" /><use href="#world" :x="-WORLD" /><use href="#world" :x="WORLD" />
                    </g>
                    <g filter="url(#edge)">
                      <use href="#lines" /><use href="#lines" :x="WORLD" />
                    </g>
                    <g class="continent"><text v-for="(c, i) in continents" :key="i" :x="c.x" :y="c.y">{{ c.t }}</text></g>
                    <g class="ocean"><text v-for="(o, i) in oceans" :key="i" :x="o.x" :y="o.y">{{ o.t }}</text></g>
                    <circle v-for="b in bubbles" :key="b.name" class="bubble" :cx="b.x" :cy="b.y" :r="b.r" />
                    <g class="country" v-for="b in bubbles" :key="b.name + 'label'">
                      <rect :x="b.x - b.w / 2" :y="b.ly - 13" :width="b.w" height="18" rx="2" />
                      <text :x="b.x" :y="b.ly">{{ b.name }}</text>
                    </g>
                    <rect x="251" y="590" width="3.600" height="3.600" fill="#f25022" /><rect x="255" y="590" width="3.600" height="3.600" fill="#7fba00" />
                    <rect x="251" y="594" width="3.600" height="3.600" fill="#00a4ef" /><rect x="255" y="594" width="3.600" height="3.600" fill="#ffb900" />
                    <text class="credit" x="260" y="596">Microsoft Bing</text>
                    <text class="credit" x="982" y="598">© 2024 Microsoft Corporation</text>
                    <a href="#terms"><text class="credit terms" x="1075" y="598">Terms</text></a>
                  </svg>
                  <button class="select-mode" aria-label="Selection mode">
                    <svg width="18" height="15" viewBox="0 0 18 15" fill="none" stroke="#fff" stroke-width="1.200"><path d="M9 11.500H1V1.500H16V6" /><path d="M9.500 5.500V13L11.500 11.500L13 14L14.200 13.400L13 11H15.500Z" fill="#444" stroke-width="1" /></svg>
                  </button>
                </div>
              </div>
            </div>
          </main>

          <aside class="filters">
            <button aria-label="Expand filters"><svg width="14" height="14" viewBox="0 0 14 14" fill="none" stroke="#333" stroke-width="1.200"><path d="M7 1L1 7L7 13M13 1L7 7L13 13" /></svg></button>
            <svg class="funnel" width="14" height="14" viewBox="0 0 14 14" fill="none" stroke="#333" stroke-width="1.300"><path d="M12.500 1V13L6.500 8.500H1.500V5.500H6.500Z" /></svg>
            <span>Filters</span>
          </aside>
        </div>

        <footer class="sheet-bar">
          <div class="devices">
            <button class="device on" aria-label="Desktop layout"><svg width="22" height="17" viewBox="0 0 22 17" fill="none" stroke="#111" stroke-width="1.500"><path d="M1 1H21V12H1ZM11 12V15.500M7 15.500H15" /></svg></button>
            <button class="device" aria-label="Mobile layout"><svg width="15" height="23" viewBox="0 0 15 23" fill="none" stroke="#5c4a55" stroke-width="1.400"><rect x="1" y="1" width="13" height="21" rx="1" /><path d="M6 18.500H9" /></svg></button>
            <button class="arrow" aria-label="Previous page"><svg width="6" height="9" viewBox="0 0 6 9" fill="#c6c4c2"><path d="M6 0V9L0 4.500Z" /></svg></button>
            <button class="arrow" aria-label="Next page"><svg width="6" height="9" viewBox="0 0 6 9" fill="#c6c4c2"><path d="M0 0V9L6 4.500Z" /></svg></button>
          </div>
          <div class="sheets">
            <div v-for="s in sheets" :key="s" :class="['sheet', { active: s === activeSheet }]">
              <button class="sheet-name" @click="activeSheet = s">{{ s }}</button>
              <button v-if="s === activeSheet" class="close" aria-label="Delete page">x</button>
            </div>
            <button class="add" aria-label="New page"><svg width="12" height="12" viewBox="0 0 12 12" stroke="#fff" stroke-width="2.600"><path d="M6 0V12M0 6H12" /></svg></button>
          </div>
        </footer>
      </div>

      <aside class="panes">
        <button aria-label="Data"><svg width="18" height="20" viewBox="0 0 18 20" fill="none" stroke="#444" stroke-width="1.300"><ellipse cx="9" cy="4" rx="7" ry="3" /><path d="M2 4V16C2 20 16 20 16 16V4" /></svg></button>
        <button aria-label="Format"><svg width="20" height="21" viewBox="0 0 20 21" fill="none"><path d="M1.500 16V7H6.500V15M6.500 8V1.500H11.500V10M11.500 5H15" stroke="#555" stroke-width="1.300" /><path d="M18.500 5.500L12 14L10.500 12.500L17 4.500Z" fill="#fff" stroke="#444" stroke-width="1.200" /><path d="M11 13.500C7 12.500 6.500 16 4.500 18.500C8 20.500 12.500 18.500 12.500 15Z" fill="#5aa5de" stroke="#1f75bd" /></svg></button>
        <button aria-label="Selection"><svg width="21" height="22" viewBox="0 0 21 22" fill="none"><path d="M8 1.500H20V13H8Z" fill="#fbd694" stroke="#e07b10" stroke-width="1.500" /><path d="M1.500 9.500H12V19H1.500Z" fill="#faf9f8" stroke="#444" stroke-width="1.300" /><path d="M12 7V19L14.500 17L16.500 21.500L18.500 20.500L16.700 16.500H20.500Z" fill="#fff" stroke="#333" stroke-width="1.300" /></svg></button>
        <button aria-label="Add pane"><svg width="19" height="19" viewBox="0 0 19 19" stroke="#111" stroke-width="1.300"><path d="M9.500 0V19M0 9.500H19" /></svg></button>
        <button class="settings" aria-label="Settings"><svg width="24" height="24" viewBox="0 0 24 24" fill="none" stroke="#333" stroke-width="1.600" stroke-linejoin="round"><path d="M9.500 2L10.500 4.300H13.500L14.500 2L18 4L17.500 6.500L19 9L22 9.500V14.500L19 15L17.500 17.500L18 20L14.500 22L13.500 19.700H10.500L9.500 22L6 20L6.500 17.500L5 15L1.500 14V10L5 9L6.500 6.500L6 4Z" /><circle cx="12" cy="12" r="3.400" /></svg></button>
      </aside>
    </div>

    <div class="status">
      <span class="page-no">Page 2 of 5</span>
      <button class="step" aria-label="Zoom out">-</button>
      <span class="track"><input v-model="zoom" type="range" min="0" max="100" aria-label="Zoom" /></span>
      <button class="step" aria-label="Zoom in">+</button>
      <span class="percent">67%</span>
      <button class="fit" aria-label="Fit to page"><svg width="20" height="16" viewBox="0 0 20 16" fill="none"><path d="M1 1H19V15H1Z" stroke="#4f83a8" stroke-width="1.500" /><path d="M4 6V4H7M13 4H16V6M16 10V12H13M7 12H4V10" stroke="#444" stroke-width="1.300" /></svg></button>
    </div>

    <div class="watermark">
      <p class="big">Activate Windows</p>
      <p>Go to Settings to activate Windows.</p>
    </div>
  </div>
</template>

<style>
html, body { margin: 0; background: #f3f2f1; }
</style>

<style scoped>
.app { position: relative; display: flex; flex-direction: column; min-height: 100vh; font-family: "Open Sans", "Noto Sans", sans-serif; color: #252423; font-size: 14px; overflow: hidden; }
button { border: 0; background: none; padding: 0; margin: 0; font: inherit; color: inherit; cursor: pointer; }
svg { display: block; flex: none; }

.top { position: relative; z-index: 2; background: #fafafa; box-shadow: 0 1px 4px rgba(0, 0, 0, .25); }
.menu-row { display: flex; align-items: flex-start; justify-content: space-between; height: 35px; padding-right: 6px; }
.menus { display: flex; gap: 36px; padding-left: 25px; }
.menu { height: 32px; line-height: 29px; padding-top: 2px; border-bottom: 3px solid transparent; box-sizing: border-box; }
.menu:first-child { margin-right: 7px; }
.menu.active { border-color: #117865; font-weight: 600; }
.share { display: flex; align-items: center; gap: 8px; height: 26px; margin-top: 3px; padding: 0 7px 0 6px; background: #117865; color: #fff; border-radius: 4px; font-size: 13px; }
.share-chev { margin-left: -4px; }
.ribbon { display: flex; align-items: center; height: 47px; padding: 0 0 0 21px; box-sizing: border-box; color: #444; position: relative; }
.tool { display: flex; align-items: center; gap: 12px; height: 32px; margin-right: 22px; white-space: nowrap; }
.about { margin-right: 18px; }
.guided { margin-right: 28px; }
.training { margin-right: 30px; }
.docs { gap: 14px; margin-right: 28px; }
.support { gap: 11px; margin-right: 20px; }
.sep { width: 1px; height: 36px; background: #cfcdcb; margin: 0 15px 0 0; flex: none; }
.sep.wide { width: 2px; margin-right: 16px; }
.external { margin-right: 19px; }
.examples { gap: 14px; margin-right: 14px; margin-left: 2px; }
.chev { margin-left: -6px; }
.consult { margin-right: 18px; }
.collapse { position: absolute; right: 5px; bottom: 4px; }

.middle { display: flex; flex: 1; }
.workspace { display: flex; flex-direction: column; flex: 1; min-width: 0; }
.work-row { display: flex; flex: 1; }
.views { display: flex; flex-direction: column; width: 44px; background: #f3f2f1; flex: none; }
.view { display: flex; align-items: center; justify-content: center; height: 44px; border-left: 3px solid transparent; padding-right: 4px; }
.view.on { border-color: #117865; }
.canvas { flex: 1; min-width: 0; background: #fff; }
.page { display: flex; width: 76%; margin: 0 auto; box-sizing: border-box; border: 2px dotted #555; border-top: 0; }
.page-nav { display: flex; flex-direction: column; justify-content: flex-end; align-items: center; width: 33px; padding: 0 0 20px; background: #333; border-right: 1px solid #777; flex: none; box-sizing: content-box; }
.page-nav a { display: grid; place-items: center; height: 41px; margin-right: 4px; }
.page-body { flex: 1; min-width: 0; padding: 22px 32px 11px 18px; }
.slicer { display: grid; grid-template-columns: repeat(4, 1fr); gap: 6px; margin: 0 -1px 12px 18px; }
.slicer button { height: 54px; padding-top: 1px; background: #e6e6e6; font-size: 13px; font-weight: 700; color: #333; }
.map { position: relative; }
.map-svg { width: 100%; height: auto; }
.select-mode { position: absolute; top: 4px; right: 24px; display: grid; place-items: center; width: 28px; height: 28px; border-radius: 50%; background: #444; border: 3px solid #212121; }
.continent text { font: 14px Roboto, sans-serif; fill: #484848; text-anchor: middle; }
.ocean text { font: italic 10px Roboto, sans-serif; fill: #6c6c6c; text-anchor: middle; }
.bubble { fill: #0e7ee2; fill-opacity: .7; stroke: #0f62c0; stroke-width: 1; }
.country rect { fill: #222; fill-opacity: .5; }
.country text { font: 600 9px "Open Sans", sans-serif; fill: #fff; text-anchor: middle; }
.credit { font: 6px "Open Sans", sans-serif; fill: #fff; }
.terms { fill: #c3cdf5; text-decoration: underline; }

.filters { display: flex; flex-direction: column; align-items: center; width: 36px; padding-top: 13px; border-left: 1px solid #a8a6a4; background: #fff; flex: none; box-sizing: border-box; }
.funnel { margin: 17px 0 8px 4px; }
.filters span { writing-mode: vertical-rl; font-weight: 600; font-size: 16px; line-height: 20px; }

.sheet-bar { display: flex; height: 39px; background: #f3f2f1; }
.devices { display: flex; align-items: flex-start; width: 185px; box-sizing: border-box; padding-left: 55px; border-right: 1px solid #a8a6a4; flex: none; }
.device { display: flex; justify-content: center; width: 26px; height: 27px; padding-top: 6px; box-sizing: content-box; border-bottom: 0; }
.device + .device { margin-left: 22px; padding-top: 4px; }
.device.on { border-bottom: 4px solid #117865; height: 23px; border-radius: 2px; padding-top: 7px; }
.arrow { padding: 15px 0 0; margin-left: 18px; }
.sheets { display: flex; }
.sheet { position: relative; display: flex; align-items: center; border-right: 1px solid #c8c6c4; font-size: 12px; box-sizing: border-box; }
.sheet-name { height: 39px; padding: 0 23px; white-space: nowrap; }
.sheet.active { background: #fff; font-weight: 600; }
.sheet.active::after { content: ""; position: absolute; left: 0; right: 0; bottom: 0; height: 4px; background: #117865; }
.close { position: absolute; top: 3px; right: 5px; line-height: 14px; }
.add { display: grid; place-items: center; width: 43px; height: 35px; margin: 2px 0 0 1px; background: #117865; }

.panes { display: flex; flex-direction: column; align-items: center; width: 35px; background: #faf9f8; border-left: 1px solid #dddbda; flex: none; box-sizing: border-box; }
.panes button { display: grid; place-items: center; width: 34px; height: 35px; }
.panes .settings { height: 36px; margin-top: auto; border-top: 1px solid #dddbda; }

.status { display: flex; align-items: center; height: 24px; padding: 0 18px 0 6px; background: #f3f2f1; border-top: 1px solid #d8d6d4; box-sizing: border-box; font-size: 12px; color: #444; }
.page-no { margin-right: auto; }
.step { width: 10px; font-size: 16px; line-height: 20px; font-weight: 600; text-align: center; }
.track { position: relative; display: block; width: 110px; height: 20px; margin: 0 6px 0 3px; }
.track::before { content: ""; position: absolute; left: 50%; top: 7px; width: 1px; height: 6px; background: #605e5c; }
.track input { appearance: none; display: block; width: 100%; height: 20px; margin: 0; background: linear-gradient(#605e5c, #605e5c) center / 100% 1px no-repeat; }
.track input::-webkit-slider-thumb { appearance: none; width: 4px; height: 12px; background: #605e5c; }
.percent { margin: 0 17px 0 18px; }

.watermark { position: absolute; right: 57px; bottom: 32px; z-index: 3; width: 236px; color: #b9b8b8; pointer-events: none; }
.watermark p { margin: 0; line-height: 19px; white-space: nowrap; }
.watermark .big { font-size: 19px; line-height: 26px; }
</style>
